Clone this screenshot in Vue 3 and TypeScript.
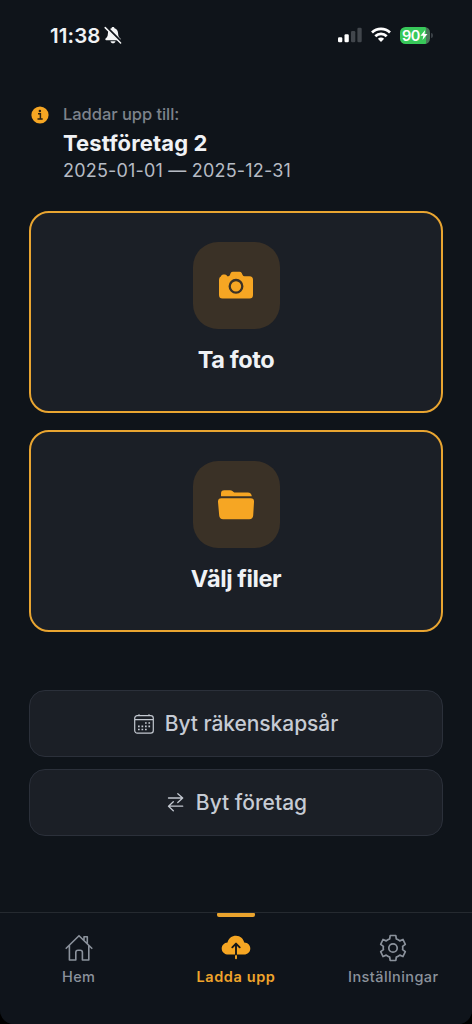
<script setup lang="ts">
interface Tab { id: string; label: string; active?: boolean }

const company = 'Testföretag 2'
const period = '2025-01-01 — 2025-12-31'
const tabs: Tab[] = [
  { id: 'home', label: 'Hem' },
  { id: 'upload', label: 'Ladda upp', active: true },
  { id: 'settings', label: 'Inställningar' },
]
</script>

<template>
  <div class="screen">
    <header class="status">
      <span class="clock">11:38</span>
      <svg class="bell" width="20" height="20" viewBox="0 0 20 20">
        <path d="M10 2C9 2 8.700 2.600 8.500 3.200C6 4 5 6 4.900 8.500C4.800 11.500 3.800 12.500 2.600 13.600C2 14.300 2.300 15.300 3.200 15.300H16.800C17.700 15.300 18 14.300 17.400 13.600C16.200 12.500 15.200 11.500 15.100 8.500C15 6 14 4 11.500 3.200C11.300 2.600 11 2 10 2ZM7.500 16.200H12.500C12.200 17.600 11.200 18.200 10 18.200S7.800 17.600 7.500 16.200Z" fill="#f4f5f6" />
        <path d="M3.200 1.800L18.200 16.800" stroke="#10151b" stroke-width="2.600" />
        <path d="M2.200 2.600L17.600 18" stroke="#f4f5f6" stroke-width="1.500" stroke-linecap="round" />
      </svg>
      <svg class="signal" width="24" height="16" viewBox="0 0 24 16">
        <rect x="0" y="10.300" width="4.300" height="5" rx="1.200" fill="#fff" />
        <rect x="6.500" y="7.300" width="4.300" height="8" rx="1.200" fill="#fff" />
        <rect x="13" y="4" width="4.300" height="11.300" rx="1.200" fill="#41464c" />
        <rect x="19.400" y="0.700" width="4.300" height="14.600" rx="1.200" fill="#41464c" />
      </svg>
      <svg class="wifi" width="20" height="16" viewBox="0 0 20 16">
        <g fill="none" stroke="#fff" stroke-width="2.700">
          <path d="M1 5.500C6 .7 14 .7 19 5.500" />
          <path d="M4.300 9.200C7.500 6.100 12.500 6.100 15.700 9.200" />
        </g>
        <path d="M6.900 11.700C8.700 10.100 11.300 10.100 13.100 11.700L10.500 14.400Q10 14.900 9.500 14.400Z" fill="#fff" />
      </svg>
      <div class="battery">
        <span>90</span>
        <svg width="8" height="12" viewBox="0 0 9 12"><path d="M5.800.3L.5 6.800H3.800L2.800 11.700L8.400 4.900H5Z" fill="#fff" /></svg>
      </div>
      <i class="battery-tip"></i>
    </header>

    <section class="context">
      <svg class="info" width="18" height="18" viewBox="0 0 18 18">
        <circle cx="9" cy="9" r="8.600" fill="#f6a623" />
        <circle cx="8.900" cy="5" r="1.250" fill="#2b2112" />
        <path d="M7 7.800H9.400V12.800M6.500 12.900H11.700" fill="none" stroke="#2b2112" stroke-width="1.500" />
      </svg>
      <div>
        <div class="caption">Laddar upp till:</div>
        <div class="company">{{ company }}</div>
        <div class="period">{{ period }}</div>
      </div>
    </section>

    <main>
      <button class="card">
        <span class="tile">
          <svg width="36" height="30" viewBox="0 0 36 30">
            <path d="M2.800 5.400Q3.500 3.600 5.200 3.600H7Q8.700 3.600 9.200 5.200H10.300Q11.400 5.200 12 3.700L12.700 2Q13.400.7 15 .7H21.500Q23 .7 23.700 2L24.600 4Q25.200 5.200 26.500 5.200H31.500Q35 5.200 35 8.700V24Q35 27.500 31.500 27.500H4.500Q1 27.500 1 24V8.700Q1 6.300 2.800 5.400Z" fill="#f6a623" />
            <circle cx="18" cy="15.300" r="6.300" fill="none" stroke="#3a3126" stroke-width="2.300" />
          </svg>
        </span>
        <span class="card-label">Ta foto</span>
      </button>
      <button class="card">
        <span class="tile">
          <svg width="38" height="32" viewBox="0 0 38 32">
            <path d="M4 7.300V4.500Q4 1.200 7.300 1.200H13Q14.500 1.200 15.700 2.200L16.600 2.900Q17.200 3.400 18.300 3.400H30.800Q34.500 3.400 34.800 7.300Z" fill="#f6a623" />
            <path d="M4.300 9.200H33.700Q37.300 9.200 37 13L36.200 26.500Q35.900 30.200 32.300 30.200H6.100Q2.500 30.200 2.200 26.500L1 13Q.8 9.200 4.300 9.200Z" fill="#f6a623" />
          </svg>
        </span>
        <span class="card-label">Välj filer</span>
      </button>
    </main>

    <section class="actions">
      <button class="action">
        <svg width="20" height="20" viewBox="0 0 20 20" fill="none" stroke="#c3c8d0" stroke-width="1.200">
          <rect x=".7" y="1.700" width="18.600" height="17.500" rx="2.600" />
          <path d="M1 5.700H19M5 .2V2M15 .2V2" />
          <path d="M11 9H12.700M14.400 9H16.100M4 12.300H5.700M7.500 12.300H9.200M11 12.300H12.700M14.400 12.300H16.100M4 15.500H5.700M7.500 15.500H9.200M11 15.500H12.700" stroke-width="1.700" />
        </svg>
        <span class="year">Byt räkenskapsår</span>
      </button>
      <button class="action swap">
        <svg width="18" height="20" viewBox="0 0 18 20" fill="none" stroke="#c3c8d0" stroke-width="1.300" stroke-linecap="round" stroke-linejoin="round">
          <path d="M1.500 5H15.700M10.800.7L15.700 5L10.800 9.500M15.700 13.200H1.500M6.300 8.700L1.500 13.200L6.300 17.700" />
        </svg>
        <span>Byt företag</span>
      </button>
    </section>

    <nav>
      <a v-for="tab in tabs" :key="tab.id" :class="[tab.id, { active: tab.active }]">
        <svg v-if="tab.id === 'home'" width="28" height="28" viewBox="0 0 28 28" fill="none" stroke="#8b929c" stroke-width="1.600" stroke-linejoin="round" stroke-linecap="round">
          <path d="M1.200 14.300L14 1.700L26.800 14.300M4.400 11.500V26H10.800V18.500Q10.800 16.300 13 16.300H15.200Q17.400 16.300 17.400 18.500V26H23.800V11.500M19 6.300V2.700H22.300V9.700" />
        </svg>
        <svg v-else-if="tab.id === 'upload'" width="30" height="28" viewBox="0 0 30 28">
          <path d="M7.500 20.600C3.500 20.600.7 18 .7 14.500C.7 11.200 3.200 8.700 6.500 8.400C7.500 4.400 10.800 1.700 15 1.700C19.400 1.700 22.500 4.700 23.200 8.600C26.800 8.800 29.300 11.200 29.300 14.600C29.300 18.200 26.600 20.600 23 20.600Z" fill="#f6a623" />
          <path d="M15 20.600V24.300" stroke="#f6a623" stroke-width="1.900" stroke-linecap="round" />
          <path d="M15 20.600V10M11.300 13.300L15 9.600L18.700 13.300" fill="none" stroke="#151719" stroke-width="1.900" stroke-linecap="round" stroke-linejoin="round" />
        </svg>
        <svg v-else width="28" height="28" viewBox="0 0 28 28" fill="none" stroke="#8b929c" stroke-width="1.700" stroke-linejoin="round">
          <path d="M11.200 1.500H16.800L17.300 4.900Q19.300 5.500 20.800 6.900L24 5.500L26.300 10.300L23.600 12.400Q24 14 23.600 15.600L26.300 17.700L24 22.500L20.800 21.100Q19.300 22.500 17.300 23.100L16.800 26.500H11.200L10.700 23.100Q8.700 22.500 7.200 21.100L4 22.500L1.700 17.700L4.400 15.600Q4 14 4.400 12.400L1.700 10.300L4 5.500L7.200 6.900Q8.700 5.500 10.700 4.900Z" />
          <circle cx="14" cy="14" r="4.200" />
        </svg>
        <span>{{ tab.label }}</span>
      </a>
    </nav>
  </div>
</template>

<style>
html, body { background: #000; }
</style>

<style scoped>
.screen {
  width: 472px;
  height: 1024px;
  display: flex;
  flex-direction: column;
  background: #0f141a;
  border-radius: 0 0 14px 14px;
  overflow: hidden;
  box-sizing: border-box;
  font-family: Inter, "Liberation Sans", sans-serif;
  color: #f0f2f5;
}
.status { display: flex; align-items: center; height: 70px; padding-left: 50px; flex: none; }
.clock { width: 51px; font-size: 20.500px; font-weight: 600; letter-spacing: .1px; white-space: nowrap; }
.bell { margin-left: 2px; }
.signal { margin-left: 215px; }
.wifi { margin-left: 9px; }
.battery {
  margin-left: 9px;
  width: 30px;
  height: 17px;
  border-radius: 5.500px;
  background: linear-gradient(90deg, #38c85a 88%, #4b7659 88%);
  display: flex;
  align-items: center;
  justify-content: center;
  font-size: 14.500px;
  font-weight: 600;
  color: #fff;
  letter-spacing: -.3px;
}
.battery-tip { width: 2px; height: 5px; margin-left: 1px; border-radius: 0 2px 2px 0; background: #3a4046; }
.context { height: 141px; display: flex; padding: 34px 0 0 31px; box-sizing: border-box; gap: 14px; flex: none; }
.info { margin-top: 2px; }
.caption { height: 22px; font-size: 16.500px; line-height: 21px; font-weight: 500; letter-spacing: -.05px; color: #7d838c; }
.company { height: 34px; font-size: 22px; line-height: 34px; font-weight: 700; letter-spacing: .12px; }
.period { height: 22px; font-size: 18px; line-height: 22px; letter-spacing: .19px; color: #b6bbc4; }
.caption, .company, .period { white-space: nowrap; }
main { display: flex; flex-direction: column; gap: 17px; padding: 0 29px; }
button { font-family: inherit; color: inherit; margin: 0; padding: 0; box-sizing: border-box; }
.card {
  height: 202px;
  border: 2px solid #e9a531;
  border-radius: 20px;
  background: #1b1f26;
  display: flex;
  flex-direction: column;
  align-items: center;
  padding-top: 29px;
}
.tile { width: 87px; height: 87px; flex: none; border-radius: 25px; background: #3a3126; display: flex; align-items: center; justify-content: center; }
.card-label { margin-top: 15px; font-size: 23.500px; line-height: 32px; font-weight: 700; white-space: nowrap; letter-spacing: -.4px; }
.actions { margin-top: 58px; padding: 0 29px; display: flex; flex-direction: column; gap: 12px; }
.action {
  height: 67px;
  border: 1px solid #2b303a;
  border-radius: 16px;
  background: #1b1f26;
  display: flex;
  align-items: center;
  justify-content: center;
  gap: 11px;
  font-size: 21px;
  line-height: 28px;
  font-weight: 500;
  color: #c6cbd4;
  white-space: nowrap;
}
.year { letter-spacing: -.06px; }
.swap { padding-left: 2px; }
nav {
  margin-top: auto;
  height: 112px;
  box-sizing: border-box;
  border-top: 1px solid #252a30;
  background: #0f141b;
  display: grid;
  grid-template-columns: repeat(3, 1fr);
}
nav a { position: relative; display: flex; flex-direction: column; align-items: center; padding-top: 21px; color: #8b929c; font-size: 14.500px; font-weight: 500; line-height: 20px; letter-spacing: .42px; }
nav a span { margin-top: 5px; white-space: nowrap; }
nav a.active { color: #f0a42b; font-weight: 600; letter-spacing: .6px; }
nav a.active::before { content: ""; position: absolute; top: 0; width: 38px; height: 4px; border-radius: 1px 1px 2px 2px; background: #e9a32e; }
</style>
